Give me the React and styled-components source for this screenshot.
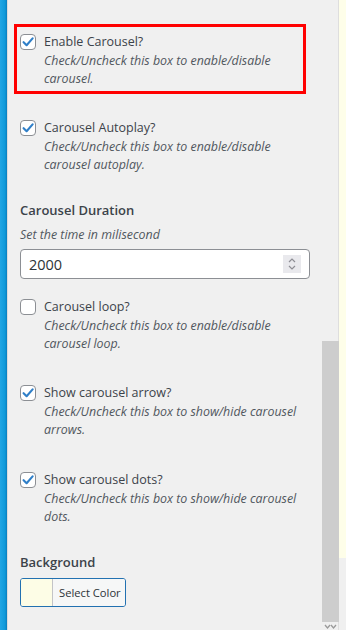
import styled, { createGlobalStyle } from "styled-components";

const GlobalStyle = createGlobalStyle`
  html, body {
    margin: 0;
    padding: 0;
    background: #f0f0f0;
  }
  body {
    font-family: "Open Sans", "Noto Sans", Arial, sans-serif;
    color: #3c434a;
  }
`;

const Page = styled.div`
  display: flex;
  width: 346px;
  height: 630px;
  overflow: hidden;
  position: relative;
`;

const BlueStrip = styled.div`
  width: 7px;
  flex: none;
  background: linear-gradient(90deg, #22a6e4 0%, #109ada 70%, #0b7dbd 100%);
  border-right: 1px solid #dcdcdc;
`;

const Panel = styled.div`
  width: 331px;
  flex: none;
  box-sizing: border-box;
  padding: 24px 29px 0 12px;
  background: #f0f0f0;
  border-right: 1px solid #dedede;
  display: flex;
  flex-direction: column;
  position: relative;
`;

const Side = styled.div`
  flex: 1;
  background: #f0f0f0;
`;

const SideNote = styled.div`
  height: 558px;
  background: #fefee9;
`;

const Highlight = styled.div`
  margin-left: -6px;
  width: 292px;
  box-sizing: border-box;
  border: 3px solid #ff0000;
  padding: 5px 3px 3px 3px;
  margin-bottom: ${(p) => p.$after}px;
`;

const Item = styled.div`
  display: flex;
  gap: 8px;
  margin-bottom: ${(p) => p.$after || 0}px;
`;

const Box = styled.span`
  width: 16px;
  height: 16px;
  flex: none;
  box-sizing: border-box;
  margin-top: 2px;
  border: 1px solid #8c8f94;
  border-radius: 4px;
  background: #fff;
  display: flex;
  align-items: center;
  justify-content: center;
`;

const Texts = styled.div`
  display: flex;
  flex-direction: column;
`;

const Title = styled.div`
  font-size: 12.5px;
  line-height: 20px;
  color: #3c434a;
`;

const Desc = styled.div`
  font-size: 12.4px;
  line-height: 18px;
  font-style: italic;
  color: #50575e;
`;

const Heading = styled.div`
  font-size: 13px;
  line-height: 20px;
  font-weight: 600;
  color: #3c434a;
  margin-bottom: 6px;
`;

const Hint = styled(Desc)`
  margin-bottom: 5px;
`;

const Field = styled.div`
  width: 290px;
  height: 30px;
  box-sizing: border-box;
  border: 1px solid #8c8f94;
  border-radius: 4px;
  background: #fff;
  display: flex;
  align-items: center;
  padding: 0 8px 0 8px;
  margin-bottom: ${(p) => p.$after}px;
`;

const FieldInput = styled.input`
  flex: 1;
  border: none;
  outline: none;
  background: transparent;
  font-family: "Open Sans", "Noto Sans", Arial, sans-serif;
  font-size: 14.5px;
  color: #2c3338;
  padding: 0;
  min-width: 0;
`;

const Spinner = styled.span`
  width: 18px;
  height: 18px;
  flex: none;
  background: #e9e9ed;
  display: flex;
  align-items: center;
  justify-content: center;
`;

const ColorButton = styled.div`
  display: flex;
  width: 106px;
  height: 29px;
  box-sizing: border-box;
  border: 1px solid #2271b1;
  border-radius: 3px;
  overflow: hidden;
`;

const Swatch = styled.span`
  width: 31px;
  flex: none;
  background: ${(p) => p.$color};
  border-right: 1px solid #c3c4c7;
`;

const ColorLabel = styled.span`
  flex: 1;
  background: #f6f7f7;
  font-size: 11.2px;
  line-height: 27px;
  padding-left: 6px;
  color: #2c3338;
`;

const ScrollThumb = styled.div`
  position: absolute;
  left: 322px;
  top: 341px;
  width: 17px;
  height: 281px;
  background: #cdcdcd;
`;

const ScrollArrow = styled.div`
  position: absolute;
  left: 324px;
  top: 624px;
  width: 13px;
  height: 6px;
  display: flex;
`;

function Check() {
  return (
    <svg width="12" height="12" viewBox="0 0 12 12">
      <path
        d="M1.6 6.2 L4.6 9.2 L10.6 2.4"
        fill="none"
        stroke="#2f7fc8"
        strokeWidth="2.1"
        strokeLinecap="round"
        strokeLinejoin="round"
      />
    </svg>
  );
}

function Option({ checked, title, desc, after }) {
  return (
    <Item $after={after}>
      <Box>{checked && <Check />}</Box>
      <Texts>
        <Title>{title}</Title>
        <Desc>{desc}</Desc>
      </Texts>
    </Item>
  );
}

export default function App() {
  return (
    <Page>
      <GlobalStyle />
      <BlueStrip />
      <Panel>
        <Highlight $after={24}>
          <Option
            checked
            title="Enable Carousel?"
            desc={
              <>
                Check/Uncheck this box to enable/disable
                <br />
                carousel.
              </>
            }
          />
        </Highlight>
        <Option
          checked
          after={26}
          title="Carousel Autoplay?"
          desc={
            <>
              Check/Uncheck this box to enable/disable
              <br />
              carousel autoplay.
            </>
          }
        />
        <Heading>Carousel Duration</Heading>
        <Hint>Set the time in milisecond</Hint>
        <Field $after={18}>
          <FieldInput defaultValue="2000" />
          <Spinner>
            <svg width="10" height="14" viewBox="0 0 10 14">
              <path
                d="M2 5 L5 2 L8 5 M2 9 L5 12 L8 9"
                fill="none"
                stroke="#8d8d94"
                strokeWidth="1.2"
              />
            </svg>
          </Spinner>
        </Field>
        <Option
          after={30}
          title="Carousel loop?"
          desc={
            <>
              Check/Uncheck this box to enable/disable
              <br />
              carousel loop.
            </>
          }
        />
        <Option
          checked
          after={31}
          title="Show carousel arrow?"
          desc={
            <>
              Check/Uncheck this box to show/hide carousel
              <br />
              arrows.
            </>
          }
        />
        <Option
          checked
          after={26}
          title="Show carousel dots?"
          desc={
            <>
              Check/Uncheck this box to show/hide carousel
              <br />
              dots.
            </>
          }
        />
        <Heading>Background</Heading>
        <ColorButton>
          <Swatch $color="#fdfde6" />
          <ColorLabel>Select Color</ColorLabel>
        </ColorButton>
      </Panel>
      <Side>
        <SideNote />
      </Side>
      <ScrollThumb />
      <ScrollArrow>
        <svg width="13" height="6" viewBox="0 0 13 6">
          <path d="M1 1 L3.5 4 L6 1 M7 1 L9.5 4 L12 1" fill="none" stroke="#9a9a9a" strokeWidth="1.3" />
        </svg>
      </ScrollArrow>
    </Page>
  );
}
